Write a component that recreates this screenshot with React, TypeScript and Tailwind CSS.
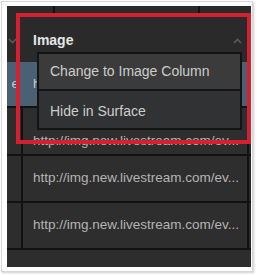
const URL_TEXT = 'http://img.new.livestream.com/ev...'

function Chevron({ up }: { up?: boolean }) {
  return (
    <svg width="9" height="6" viewBox="0 0 9 6" fill="none" stroke="#5a5a5a" strokeWidth="1.6">
      {up ? <path d="M1 5 L4.5 1.5 L8 5" /> : <path d="M1 1 L4.5 4.5 L8 1" />}
    </svg>
  )
}

function Row({ h, pad = '' }: { h: string; pad?: string }) {
  return (
    <div className={`flex ${h} border-b-2 border-[#121212]`}>
      <div className="w-[14px] bg-[#2d2d2d]" />
      <div className="w-[2px] bg-[#121212]" />
      <div className={`w-[224px] bg-[#2e2e2e] flex items-center pl-[10px] text-[13.5px] text-[#b4b4b4] whitespace-nowrap overflow-hidden ${pad}`}>
        {URL_TEXT}
      </div>
      <div className="w-[2px] bg-[#121212]" />
      <div className="flex-1 bg-[#2b2b2b]" />
    </div>
  )
}

export default function App() {
  return (
    <div className="w-[257px] h-[275px] bg-white">
      <div className="ml-[1px] mt-[1px] w-[252px] h-[271px] border border-[#d6d6d6] shadow-[1px_1px_2px_rgba(0,0,0,0.2)] bg-white pl-[5px] pt-[4px]">
        <div className="relative w-[244px] h-[261px] bg-[#2c2c2c] overflow-hidden flex flex-col font-['Liberation_Sans',Arial,sans-serif]">
          {/* header */}
          <div className="h-[56px] flex flex-col bg-[#2a2a2a]">
            <div className="h-[7px] flex">
              <div className="w-[46px]" />
              <div className="w-[2px] bg-[#121212]" />
              <div className="w-[143px]" />
              <div className="w-[2px] bg-[#121212]" />
            </div>
            <div className="flex-1 flex items-center pt-[6px]">
              <div className="w-[26px] pl-[1px] flex items-center">
                <Chevron />
              </div>
              <span className="text-[14px] font-bold text-[#e6e6e6]">Image</span>
              <div className="flex-1" />
              <div className="pr-[9px] flex items-center">
                <Chevron up />
              </div>
            </div>
          </div>

          {/* selected row, mostly under the menu */}
          <div className="flex h-[46px] bg-[#4a6173] border-b-2 border-[#121212]">
            <div className="w-[16px] flex items-center justify-end pr-[4px] overflow-hidden text-[13.5px] text-[#c4ccd2]">e</div>
            <div className="flex-1 flex items-center pl-[10px] text-[13.5px] text-[#c4ccd2]">
              <span className="w-[4px] overflow-hidden whitespace-nowrap">h</span>
            </div>
          </div>

          <Row h="h-[48px]" pad="pt-[20px]" />
          <Row h="h-[47px]" />
          <Row h="h-[47px]" />
          <div className="flex-1 bg-[#2d2d2d]" />

          {/* highlight box */}
          <div className="absolute left-[9px] top-[7px] w-[235px] h-[131px] border-4 border-[#d4202f]" />

          {/* context menu */}
          <div className="absolute left-[30px] top-[46px] w-[205px] h-[78px] border-2 border-[#141414] flex flex-col text-[14px] text-[#cdcdcd]">
            <div className="h-[37px] bg-[#3b3b3b] flex items-center pl-[11px] border-b-2 border-[#141414]">
              Change to Image Column
            </div>
            <div className="flex-1 bg-[#313233] flex items-center pl-[11px] pt-[3px]">Hide in Surface</div>
          </div>
        </div>
      </div>
    </div>
  )
}
